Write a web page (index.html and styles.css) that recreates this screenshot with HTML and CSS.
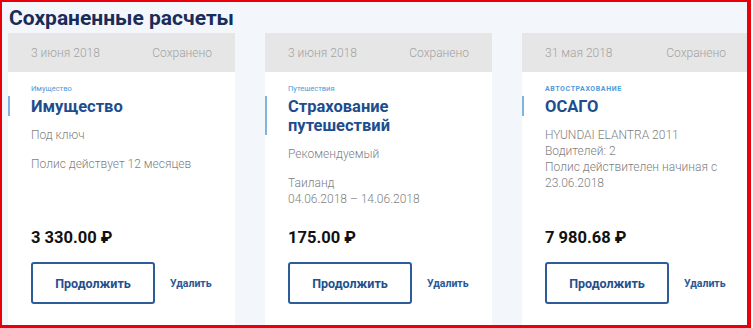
FILE: index.html
```html
<!DOCTYPE html>
<html lang="ru">
<head>
<meta charset="utf-8">
<title>Сохраненные расчеты</title>
<link rel="stylesheet" href="styles.css">
</head>
<body>
<div class="frame">
  <h1 class="page-title">Сохраненные расчеты</h1>
  <div class="cards">
    <div class="card">
      <div class="card-head"><span>3 июня 2018</span><span>Сохранено</span></div>
      <div class="card-body">
        <div class="info">
          <div class="label">Имущество</div>
          <div class="title">Имущество</div>
          <p class="text">Под ключ</p>
          <p class="text">Полис действует 12 месяцев</p>
        </div>
        <div class="price">3 330.00 ₽</div>
        <div class="actions">
          <button class="btn">Продолжить</button>
          <a class="del">Удалить</a>
        </div>
      </div>
    </div>
    <div class="card">
      <div class="card-head"><span>3 июня 2018</span><span>Сохранено</span></div>
      <div class="card-body">
        <div class="info">
          <div class="label">Путешествия</div>
          <div class="title">Страхование<br>путешествий</div>
          <p class="text">Рекомендуемый</p>
          <p class="text">Таиланд<br>04.06.2018 – 14.06.2018</p>
        </div>
        <div class="price">175.00 ₽</div>
        <div class="actions">
          <button class="btn">Продолжить</button>
          <a class="del">Удалить</a>
        </div>
      </div>
    </div>
    <div class="card">
      <div class="card-head"><span>31 мая 2018</span><span>Сохранено</span></div>
      <div class="card-body">
        <div class="info">
          <div class="label caps">Автострахование</div>
          <div class="title">ОСАГО</div>
          <p class="text">HYUNDAI ELANTRA 2011<br>Водителей: 2<br>Полис действителен начиная с<br>23.06.2018</p>
        </div>
        <div class="price">7 980.68 ₽</div>
        <div class="actions">
          <button class="btn">Продолжить</button>
          <a class="del">Удалить</a>
        </div>
      </div>
    </div>
  </div>
</div>
</body>
</html>
```

FILE: styles.css
```css
* { box-sizing: border-box; }
html, body {
  margin: 0;
  padding: 0;
  background: #ffffff;
  font-family: Roboto, "Open Sans", "Noto Sans", "DejaVu Sans", sans-serif;
}
.frame {
  width: 751px;
  height: 328px;
  border-style: solid;
  border-color: #e8000b;
  border-width: 2px 4px 3px 2px;
  background: #f3f7fc;
  overflow: hidden;
  padding: 3px 0 0 6px;
}
.page-title {
  margin: 0 0 2px 1px;
  font-size: 21px;
  line-height: 26px;
  font-weight: 700;
  color: #1a2c58;
}
.cards {
  display: flex;
  gap: 30px;
  width: 800px;
}
.card {
  flex: 0 0 227px;
  min-width: 0;
  height: 300px;
  display: flex;
  flex-direction: column;
  background: #ffffff;
}
.card-head {
  height: 39px;
  flex: 0 0 39px;
  background: #e6e6e6;
  display: flex;
  justify-content: space-between;
  align-items: center;
  padding: 1px 23px 0;
  font-size: 12px;
  font-weight: 300;
  color: #a3a3a3;
}
.card-body {
  flex: 1;
  display: flex;
  flex-direction: column;
  padding: 12px 23px 29px 23px;
}
.info { flex: 1; }
.label {
  font-size: 7.5px;
  line-height: 10px;
  color: #4d9bd6;
}
.label.caps {
  text-transform: uppercase;
  font-weight: 700;
  letter-spacing: 0.6px;
  font-size: 7px;
}
.title {
  margin: 2px 0 0 -23px;
  padding: 1px 0 0 21px;
  border-left: 2px solid #7fb4dc;
  font-size: 16.5px;
  line-height: 19px;
  font-weight: 700;
  color: #1d4d8c;
}
.text {
  margin: 11px 0 0;
  font-size: 12px;
  font-weight: 300;
  line-height: 16px;
  color: #7f7f7f;
}
.text + .text { margin-top: 13px; }
.price {
  font-size: 16.5px;
  line-height: 20px;
  font-weight: 700;
  color: #111111;
}
.actions {
  display: flex;
  align-items: center;
  margin-top: 14px;
}
.btn {
  width: 124px;
  height: 42px;
  border: 2px solid #2e5c98;
  border-radius: 3px;
  background: #ffffff;
  font-family: inherit;
  font-size: 12.5px;
  font-weight: 700;
  color: #24508c;
  padding: 0;
}
.del {
  margin-left: 15px;
  font-size: 10.5px;
  font-weight: 700;
  color: #2a5896;
}
```
